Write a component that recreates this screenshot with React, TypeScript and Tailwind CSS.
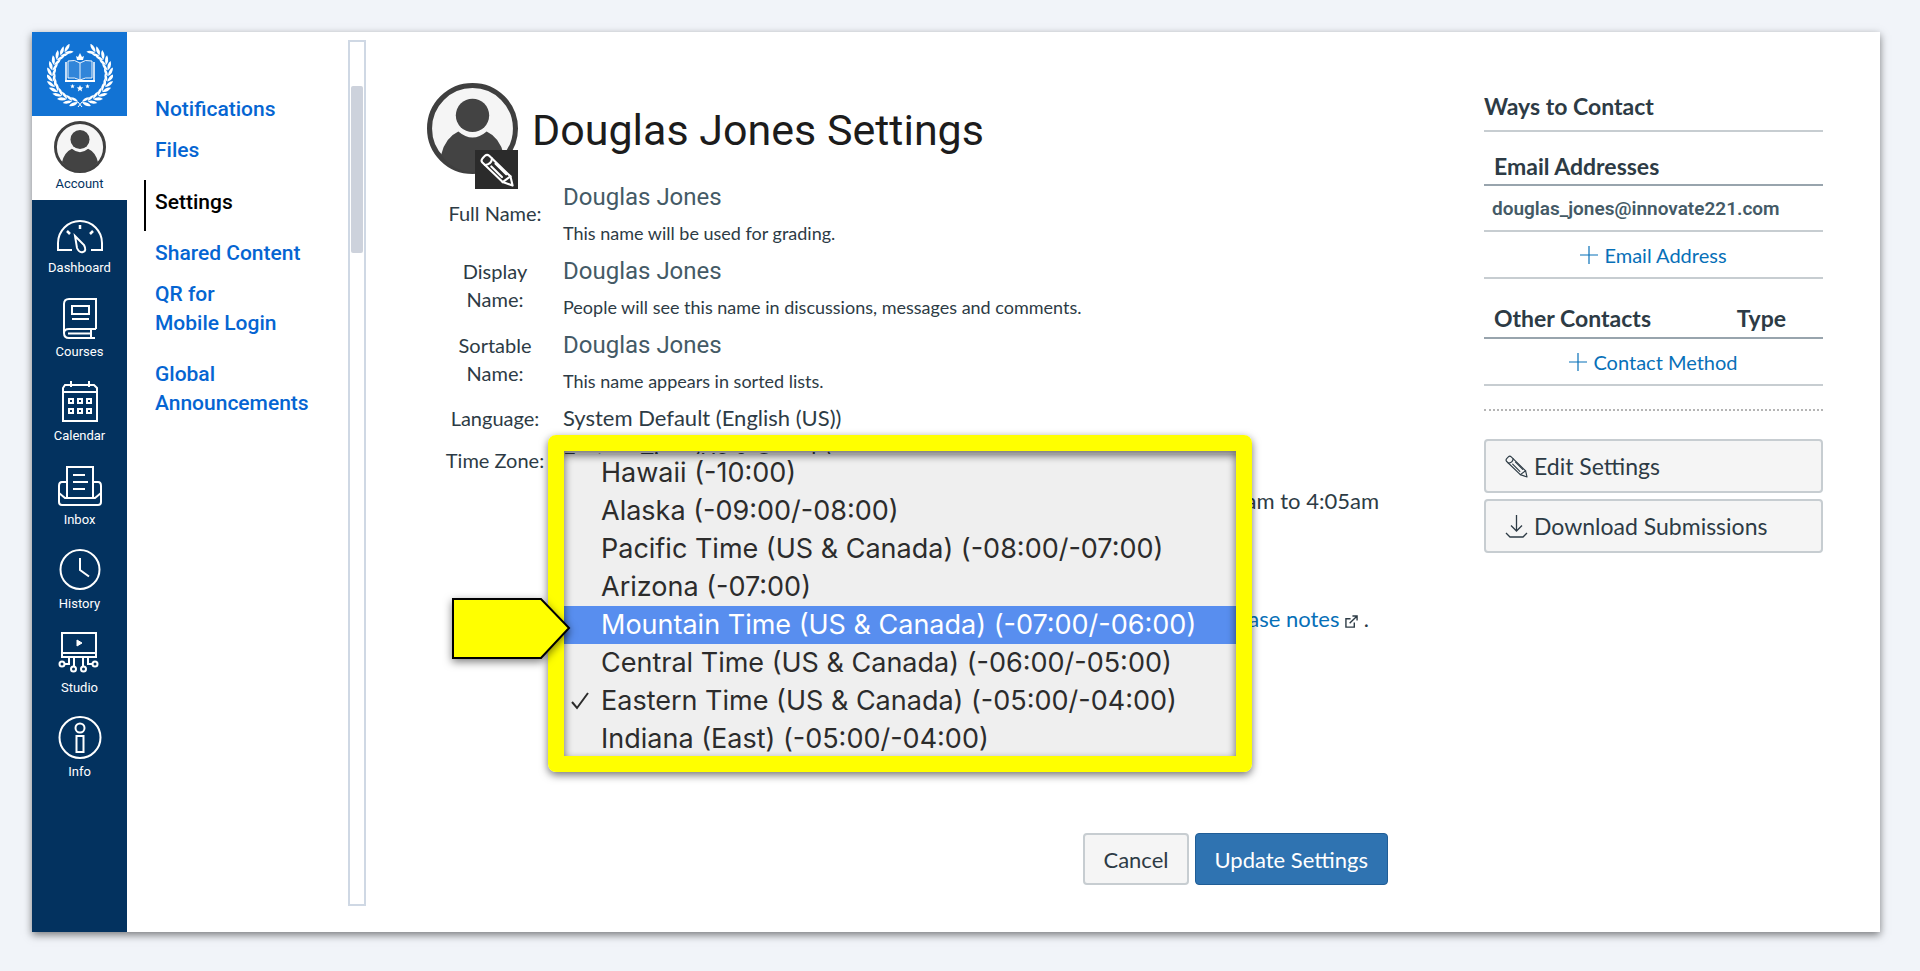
import React from "react";

const LEAVES = [4, 16, 28, 40, 52, 64, 76, 88, 100, 112, 124, 136, 147];

function Half() {
  return (
    <g fill="#fff">
      {LEAVES.map((a) => {
        const t = ((a + 92) * Math.PI) / 180;
        const x = 28 * Math.cos(t);
        const y = 29 + 27 * Math.sin(t);
        return (
          <g key={a} transform={`translate(${x} ${y}) rotate(${a + 182})`}>
            <path d="M-1 0 Q1 -5 7.500 -5 Q6 -0.500 -1 0Z" />
            <path d="M-1 0 Q1 4.500 7 4 Q5 0.500 -1 0Z" />
          </g>
        );
      })}
    </g>
  );
}

function Logo() {
  return (
    <svg viewBox="-33 -2 66 64" className="h-16 w-[66px]" aria-hidden="true">
      <Half />
      <g transform="scale(-1 1)">
        <Half />
      </g>
      <path d="M-2 61 L2 56 M2 61 L-2 56" stroke="#fff" strokeWidth="1" />
      <path d="M-4 10 L-2 11 L0 7 L2 11 L4 10 L3 14 L-3 14Z" fill="#fff" />
      <path d="M-14 16 V35 H14 V16" fill="none" stroke="#fff" strokeWidth="1.500" />
      <path d="M0 17 V34 M0 17 Q-5 13 -12 15 V32 Q-5 31 0 34 Q5 31 12 32 V15 Q5 13 0 17" fill="#ffffff22" stroke="#fff" strokeWidth="0.900" />
      <path d="M-15 35 H15" stroke="#fff" strokeWidth="2" />
      <path d="M0 39 l1 2.200 2.300.2-1.800 1.600.6 2.400-2.100-1.300-2.100 1.300.6-2.400-1.800-1.600 2.300-.2z" fill="#fff" />
      <path d="M-7.500 38 l.7 1.500 1.500.1-1.200 1.100.4 1.600-1.400-.9-1.400.9.4-1.600-1.200-1.100 1.500-.1zM7.500 38 l.7 1.500 1.500.1-1.200 1.100.4 1.600-1.400-.9-1.400.9.4-1.600-1.200-1.100 1.500-.1z" fill="#fff" />
    </svg>
  );
}

function Avatar({ className }: { className: string }) {
  return (
    <svg viewBox="0 0 90 90" className={className} aria-hidden="true">
      <circle cx="45" cy="45" r="42.500" fill="#f5f5f5" stroke="#3f3f3f" strokeWidth="5" />
      <circle cx="45" cy="32" r="16.500" fill="#434343" />
      <path d="M14 71 Q18 54 31 48 Q45 60 59 48 Q72 54 76 71 Q64 88 45 88 Q26 88 14 71Z" fill="#434343" />
    </svg>
  );
}

function Pencil({ className, width }: { className: string; width: number }) {
  return (
    <svg viewBox="0 0 24 24" className={className} fill="none" stroke="currentColor" strokeWidth={width} strokeLinejoin="round" strokeLinecap="round" aria-hidden="true">
      <path d="M1.500 6.500 Q0.500 5 2 3.500 L3.500 2 Q5 0.500 6.500 2 L21.500 16.500 L23 23 L16 20.500 Z" />
      <path d="M3.500 8.500 Q8 8 8.500 4 M21.500 16.500 L16 20.500 M8 9.500 L15.500 17 M11 7.500 L18.500 15" />
    </svg>
  );
}

const stroke = { fill: "none", stroke: "#fff", strokeWidth: 2 } as const;

const NAV = [
  {
    label: "Dashboard",
    art: (
      <g {...stroke}>
        <path d="M15 38 H1 V31 A22 22 0 0 1 45 31 V38 H34" />
        <path d="M18 24 L27 33 Q30 39 26 40 Q22 41 20 36 Z" />
        <path d="M23 13 v4 M10 19 l3 3 M36 19 l-3 3" strokeWidth="2.500" />
      </g>
    ),
  },
  {
    label: "Courses",
    art: (
      <g {...stroke}>
        <path d="M39 33 V3 H12 Q7 3 7 8 V37 Q7 42 12 42 H38 M39 33 H12 Q7 33 7 37 M34 33 V42 M11 37.500 H33" />
        <path d="M15 10 H32 V18 H15Z M15 23 H32" />
      </g>
    ),
  },
  {
    label: "Calendar",
    art: (
      <g {...stroke}>
        <path d="M8 5 H37 L40 8 V41 H6 V8 Z M6 12 H40 M14 1 V7 M32 1 V7" />
        <path d="M12 19h4v4h-4z M21 19h4v4h-4z M30 19h4v4h-4z M12 29h4v4h-4z M21 29h4v4h-4z M30 29h4v4h-4z" />
      </g>
    ),
  },
  {
    label: "Inbox",
    art: (
      <g {...stroke}>
        <path d="M10 18 H5 Q2 18 2 22 V38 Q2 41 5 41 H41 Q44 41 44 38 V22 Q44 18 41 18 H36" />
        <path d="M10 33 V3 H36 V33 M2 29 L8 34 H38 L44 29" />
        <path d="M16 11 H28 M16 18 H31 M16 25 H28" />
      </g>
    ),
  },
  {
    label: "History",
    art: (
      <g {...stroke}>
        <circle cx="23" cy="21.500" r="19.500" />
        <path d="M23 10 V22 L32 28.500" />
      </g>
    ),
  },
  {
    label: "Studio",
    art: (
      <g {...stroke}>
        <path d="M5 1 H39 V25 H5Z M5 21 H39" />
        <path d="M20 8 L25 11 L20 14Z" fill="#fff" strokeWidth="1" />
        <path d="M12 25 V32 H8 M17 25 V34 M26 25 V34 M31 25 V32 H35" />
        <circle cx="5" cy="32" r="2.500" />
        <circle cx="16.500" cy="37" r="2.500" />
        <circle cx="26.500" cy="37" r="2.500" />
        <circle cx="38" cy="32" r="2.500" />
      </g>
    ),
  },
  {
    label: "Info",
    art: (
      <g {...stroke}>
        <circle cx="23" cy="21.500" r="20.500" />
        <circle cx="23" cy="12" r="4.500" />
        <path d="M19.500 20 H26.500 V36 H19.500Z" />
      </g>
    ),
  },
];

const ZONES = [
  "Hawaii (-10:00)",
  "Alaska (-09:00/-08:00)",
  "Pacific Time (US & Canada) (-08:00/-07:00)",
  "Arizona (-07:00)",
  "Mountain Time (US & Canada) (-07:00/-06:00)",
  "Central Time (US & Canada) (-06:00/-05:00)",
  "Eastern Time (US & Canada) (-05:00/-04:00)",
  "Indiana (East) (-05:00/-04:00)",
];

const NAMES = [
  { label: "Full Name:", note: "This name will be used for grading.", pad: "pt-[17px]", width: "" },
  { label: "Display Name:", note: "People will see this name in discussions, messages and comments.", pad: "pt-px", width: "w-20" },
  { label: "Sortable Name:", note: "This name appears in sorted lists.", pad: "pt-px", width: "w-20" },
];

function GlobalNav() {
  return (
    <nav aria-label="Global" className="flex w-[95px] shrink-0 flex-col bg-[#03325f] font-[Roboto,sans-serif] text-[13px] leading-4 text-white">
      <a href="#home" aria-label="Home" className="flex h-[84px] items-center justify-center bg-[#1273d4] pt-1">
        <Logo />
      </a>
      <a href="#account" className="flex h-[84px] flex-col items-center justify-between bg-white pt-[5px] pb-2 text-[#03325f]">
        <Avatar className="h-[52px] w-[52px]" />
        Account
      </a>
      {NAV.map((n) => (
        <a key={n.label} href={`#${n.label}`} className="flex h-[84px] flex-col items-center justify-between pt-3 pb-2">
          <svg viewBox="0 0 46 44" className="h-11 w-[46px]" aria-hidden="true">
            {n.art}
          </svg>
          {n.label}
        </a>
      ))}
    </nav>
  );
}

function AccountNav() {
  return (
    <nav aria-label="Account" className="flex w-[221px] shrink-0 flex-col pt-[55px] pl-[17px] font-[Roboto,sans-serif] text-[21px] leading-[29px] font-medium text-[#0565d2]">
      <a href="#notifications" className="pl-[11px]">Notifications</a>
      <a href="#files" className="mt-3 pl-[11px]">Files</a>
      <a href="#settings" aria-current="page" className="mt-[15px] border-l-2 border-black pt-2 pb-[14px] pl-[9px] text-black">Settings</a>
      <a href="#shared" className="mt-2 pl-[11px]">Shared Content</a>
      <a href="#qr" className="mt-3 pl-[11px]">QR for<br />Mobile Login</a>
      <a href="#announcements" className="mt-[22px] pl-[11px]">Global<br />Announcements</a>
    </nav>
  );
}

function ZoneMenu() {
  return (
    <div className="absolute top-[-11px] left-[-15px] z-10 w-[704px] rounded-[8px] border-[16px] border-[#ffff00] shadow-[0_3px_8px_rgba(0,0,0,0.55)]">
      <ul role="listbox" aria-label="Time Zone" className="mt-[3px] h-[302px] overflow-hidden bg-[#efefef] font-[Inter,sans-serif] text-[27px] text-[#2c2c2c]">
        {ZONES.map((z, i) => (
          <li
            key={z}
            role="option"
            aria-selected={i === 6}
            className={
              i === 4
                ? "flex h-[38px] items-center bg-[#588eef] pl-[37px] whitespace-nowrap text-white"
                : "flex h-[38px] items-center pl-[37px] whitespace-nowrap"
            }
          >
            {i === 6 && (
              <svg viewBox="0 0 18 18" className="mr-3 -ml-[30px] h-[18px] w-[18px]" fill="none" stroke="#2c2c2c" strokeWidth="2" aria-hidden="true">
                <path d="M1 10 L6 16 L17 1" />
              </svg>
            )}
            {z}
          </li>
        ))}
      </ul>
      <div className="pointer-events-none absolute inset-0 shadow-[inset_0_4px_8px_rgba(0,0,0,0.6)]" />
      <svg viewBox="0 0 120 64" className="absolute top-[147px] left-[-112px] h-16 w-[120px] overflow-visible drop-shadow-[0_3px_4px_rgba(0,0,0,0.5)]" aria-hidden="true">
        <path d="M1 1 H89 L117 30 L89 60 H1Z" fill="#ffff00" stroke="#000" strokeWidth="2" />
      </svg>
    </div>
  );
}

function Main() {
  return (
    <main className="flex min-w-0 grow flex-col pt-[51px] pr-[96px] pl-[61px] text-[#2d3b45]">
      <header className="flex h-[99px]">
        <div className="relative h-[106px] w-[91px]">
          <Avatar className="h-[91px] w-[91px]" />
          <button aria-label="Edit picture" className="absolute right-0 bottom-0 flex h-[39px] w-[43px] items-center justify-center bg-[#2b2b2b] text-white">
            <Pencil className="h-[34px] w-[34px]" width={1.5} />
          </button>
        </div>
        <h1 className="pt-[21px] pl-[14px] font-[Roboto,sans-serif] text-[43px] leading-[52px] text-[#1c1c1c]">Douglas Jones Settings</h1>
      </header>
      <dl className="grid grid-cols-[136px_1fr]">
        {NAMES.map((n) => (
          <React.Fragment key={n.label}>
            <dt className={`flex h-[74px] justify-center text-center text-[20px] leading-7 ${n.pad}`}>
              <span className={n.width}>{n.label}</span>
            </dt>
            <dd className="h-[74px] font-[Roboto,sans-serif] text-[24px] leading-[30px] text-[#445a66]">
              Douglas Jones
              <small className="mt-[9px] block font-[Lato,sans-serif] text-[18px] leading-6 text-[#2d3b45]">{n.note}</small>
            </dd>
          </React.Fragment>
        ))}
        <dt className="h-[42px] text-center text-[20px] leading-7">Language:</dt>
        <dd className="h-[42px] text-[22px] leading-7">System Default (English (US))</dd>
        <dt className="text-center text-[20px] leading-7">Time Zone:</dt>
        <dd className="relative h-[387px] text-[22px] leading-7">
          Eastern Time (US &amp; Canada)
          <p className="mt-[13px] pr-[9px] text-right">am to 4:05am</p>
          <p className="mt-[90px] pr-[19px] text-right">
            <a href="#notes" className="text-[#0770b8]">ase notes</a>{" "}
            <svg viewBox="0 0 14 14" className="inline h-[13px] w-[13px]" fill="none" stroke="currentColor" strokeWidth="1.500" aria-hidden="true">
              <path d="M6 4 H1 V13 H10 V8 M5 9 L13 1 M8 1 H13 V6" />
            </svg>{" "}.
          </p>
          <ZoneMenu />
        </dd>
      </dl>
      <div className="flex justify-end gap-[6px] text-[22px]">
        <button className="h-[52px] rounded-[4px] border-2 border-[#c7cdd1] bg-[#f5f5f5] px-[18px]">Cancel</button>
        <button className="h-[52px] rounded-[4px] border border-[#205d96] bg-[#2f73b1] px-[19px] text-white">Update Settings</button>
      </div>
    </main>
  );
}

function Plus() {
  return (
    <svg viewBox="0 0 18 18" className="h-[18px] w-[18px]" stroke="currentColor" strokeWidth="1.200" aria-hidden="true">
      <path d="M9 0 V18 M0 9 H18" />
    </svg>
  );
}

function Contact() {
  return (
    <aside className="mr-[57px] flex w-[339px] shrink-0 flex-col pt-14 text-[#2d3b45]">
      <h2 className="h-11 border-b-2 border-[#c7cdd1] text-[23px] leading-9 font-bold">Ways to Contact</h2>
      <h3 className="h-[54px] border-b-2 border-[#98a4ad] pt-4 pl-[10px] text-[23px] leading-9 font-bold">Email Addresses</h3>
      <p className="h-[46px] border-b-2 border-[#c7cdd1] pl-2 font-[Roboto,sans-serif] text-[19px] leading-[46px] font-semibold text-[#445a66]">douglas_jones@innovate221.com</p>
      <a href="#email" className="flex h-[47px] items-center justify-center gap-[6px] border-b-2 border-[#c7cdd1] text-[20px] text-[#0770b8]"><Plus />Email Address</a>
      <h3 className="flex h-[60px] justify-between border-b-2 border-[#98a4ad] pt-[21px] pr-[37px] pl-[10px] text-[23px] leading-9 font-bold"><span>Other Contacts</span><span>Type</span></h3>
      <a href="#contact" className="flex h-[47px] items-center justify-center gap-[6px] border-b-2 border-[#c7cdd1] text-[20px] text-[#0770b8]"><Plus />Contact Method</a>
      <hr className="mt-[23px] border-t-2 border-dotted border-[#b5b5b5]" />
      <button className="mt-7 flex h-[54px] items-center gap-[6px] rounded-[4px] border-2 border-[#c7cdd1] bg-[#f5f5f5] pl-[19px] text-[23px]"><Pencil className="h-[23px] w-[23px]" width={1.2} />Edit Settings</button>
      <button className="mt-[6px] flex h-[54px] items-center gap-[6px] rounded-[4px] border-2 border-[#c7cdd1] bg-[#f5f5f5] pl-[19px] text-[23px]">
        <svg viewBox="0 0 23 23" className="h-[23px] w-[23px]" fill="none" stroke="currentColor" strokeWidth="1.300" aria-hidden="true">
          <path d="M11.500 0 V16 M6 10.500 L11.500 16 L17 10.500 M1 18 L5 22 H18 L22 18" />
        </svg>
        Download Submissions
      </button>
    </aside>
  );
}

export default function App() {
  return (
    <div className="min-h-screen bg-[#f1f4f9] pt-8 pr-10 pb-[39px] pl-8 font-[Lato,sans-serif]">
      <div className="flex min-h-[900px] bg-white shadow-[0_3px_8px_rgba(0,0,0,0.5)]">
        <GlobalNav />
        <div className="flex shrink-0 pt-2 pb-[26px]">
          <AccountNav />
          <div className="w-[18px] border-2 border-[#cfd8e4] px-px pt-11">
            <div className="h-[167px] rounded-[2px] bg-[#cdd2dc]" />
          </div>
        </div>
        <Main />
        <Contact />
      </div>
    </div>
  );
}
